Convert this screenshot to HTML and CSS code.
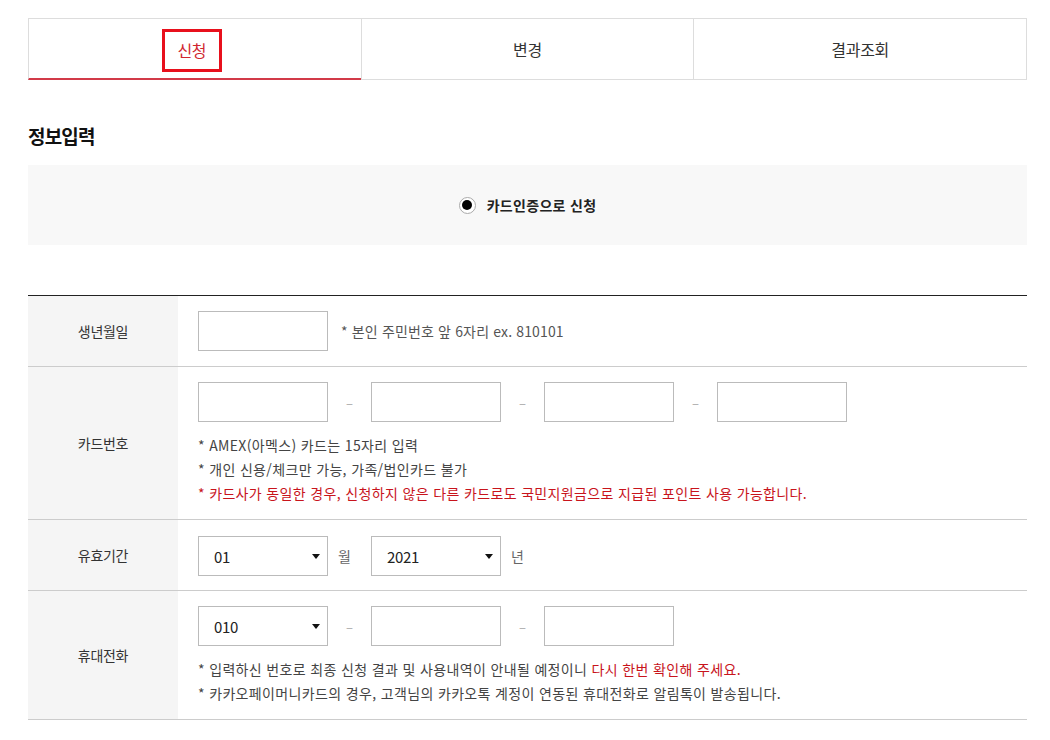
FILE: index.html
```html
<!DOCTYPE html>
<html lang="ko">
<head>
<meta charset="utf-8">
<link rel="stylesheet" href="styles.css">
</head>
<body>
<div class="page">
  <div class="tabs">
    <div class="tab active"><span class="tab-mark">신청</span></div>
    <div class="tab">변경</div>
    <div class="tab">결과조회</div>
  </div>

  <h2 class="title">정보입력</h2>

  <div class="method">
    <label class="radio"><span class="radio-dot"></span>카드인증으로 신청</label>
  </div>

  <div class="form">
    <div class="row row-birth">
      <div class="label">생년월일</div>
      <div class="cell">
        <div class="line">
          <span class="input"></span>
          <span class="hint">* 본인 주민번호 앞 6자리 ex. 810101</span>
        </div>
      </div>
    </div>
    <div class="row row-card">
      <div class="label">카드번호</div>
      <div class="cell">
        <div class="line">
          <span class="input"></span><span class="dash">–</span>
          <span class="input"></span><span class="dash">–</span>
          <span class="input"></span><span class="dash">–</span>
          <span class="input"></span>
        </div>
        <div class="notes">
          <p>* AMEX(아멕스) 카드는 15자리 입력</p>
          <p>* 개인 신용/체크만 가능, 가족/법인카드 불가</p>
          <p class="red">* 카드사가 동일한 경우, 신청하지 않은 다른 카드로도 국민지원금으로 지급된 포인트 사용 가능합니다.</p>
        </div>
      </div>
    </div>
    <div class="row row-exp">
      <div class="label">유효기간</div>
      <div class="cell">
        <div class="line">
          <span class="select">01<i class="caret"></i></span><span class="unit">월</span>
          <span class="select">2021<i class="caret"></i></span><span class="unit">년</span>
        </div>
      </div>
    </div>
    <div class="row row-phone">
      <div class="label">휴대전화</div>
      <div class="cell">
        <div class="line">
          <span class="select">010<i class="caret"></i></span><span class="dash">–</span>
          <span class="input"></span><span class="dash">–</span>
          <span class="input"></span>
        </div>
        <div class="notes">
          <p>* 입력하신 번호로 최종 신청 결과 및 사용내역이 안내될 예정이니 <span class="red">다시 한번 확인해 주세요.</span></p>
          <p>* 카카오페이머니카드의 경우, 고객님의 카카오톡 계정이 연동된 휴대전화로 알림톡이 발송됩니다.</p>
        </div>
      </div>
    </div>
  </div>
</div>
</body>
</html>
```

FILE: styles.css
```css
* { box-sizing: border-box; }
html, body { margin: 0; padding: 0; background: #fff; }
body {
  font-family: "Noto Sans CJK KR", "Noto Sans", sans-serif;
  color: #333;
}
.page {
  width: 999px;
  margin-left: 28px;
  padding-top: 18px;
}
.tabs {
  display: flex;
  height: 62px;
  border-top: 1px solid #ddd;
  border-right: 1px solid #ddd;
  border-bottom: 1px solid #ddd;
}
.tab {
  flex: 1 1 0;
  display: flex;
  align-items: center;
  justify-content: center;
  border-left: 1px solid #ddd;
  font-size: 16px;
  color: #333;
  letter-spacing: -0.3px;
}
.tab.active {
  color: #d0252e;
  border-bottom: 2px solid #d23a48;
  margin-bottom: -1px;
  padding-top: 1px;
}
.tab-mark {
  display: flex;
  align-items: center;
  justify-content: center;
  width: 60px;
  height: 43px;
  border: 3px solid #e8101c;
  margin-top: 2px;
  margin-right: 6px;
}
.title {
  margin: 41px 0 0;
  height: 44px;
  font-size: 19px;
  font-weight: 700;
  color: #111;
  letter-spacing: -0.8px;
  line-height: 30px;
}
.method {
  height: 80px;
  background: #f8f8f8;
  display: flex;
  align-items: center;
  justify-content: center;
}
.radio {
  display: flex;
  align-items: center;
  gap: 11px;
  font-size: 14px;
  font-weight: 700;
  color: #222;
  letter-spacing: 0.3px;
}
.radio-dot {
  width: 17px;
  height: 17px;
  border-radius: 50%;
  border: 1px solid #aaa;
  background: #fff;
  display: flex;
  align-items: center;
  justify-content: center;
}
.radio-dot::after {
  content: "";
  width: 10px;
  height: 10px;
  border-radius: 50%;
  background: #000;
}
.form {
  margin-top: 50px;
  border-top: 1px solid #222;
}
.row {
  display: flex;
  border-bottom: 1px solid #ccc;
}
.label {
  width: 150px;
  flex: none;
  background: #f5f5f5;
  display: flex;
  align-items: center;
  justify-content: center;
  font-size: 14px;
  color: #333;
  letter-spacing: -0.3px;
}
.cell {
  flex: 1;
}
.row-birth .cell { padding: 15px 20px 15px; }
.row-card .cell { padding: 15px 20px 14px; }
.row-exp .cell { padding: 16px 20px 14px; }
.row-phone .cell { padding: 15px 20px 14px; }
.line {
  display: flex;
  align-items: center;
  height: 40px;
}
.input, .select {
  width: 130px;
  height: 40px;
  border: 1px solid #bbb;
  background: #fff;
  flex: none;
}
.select {
  position: relative;
  display: flex;
  align-items: center;
  padding-left: 15px;
  padding-top: 1px;
  font-size: 15px;
  color: #222;
  letter-spacing: -0.3px;
}
.caret {
  position: absolute;
  right: 7px;
  top: 17px;
  width: 0;
  height: 0;
  border-left: 4px solid transparent;
  border-right: 4px solid transparent;
  border-top: 5px solid #111;
}
.dash {
  width: 43px;
  text-align: center;
  color: #aaa;
  font-size: 13px;
}
.unit {
  width: 43px;
  padding-left: 10px;
  font-size: 14px;
  color: #666;
}
.hint {
  margin-left: 13px;
  font-size: 14px;
  color: #555;
  letter-spacing: 0.15px;
}
.notes {
  margin-top: 11px;
}
.notes p {
  margin: 0;
  font-size: 14px;
  line-height: 24px;
  color: #444;
  letter-spacing: 0.35px;
}
.red { color: #c8141c !important; }
```
